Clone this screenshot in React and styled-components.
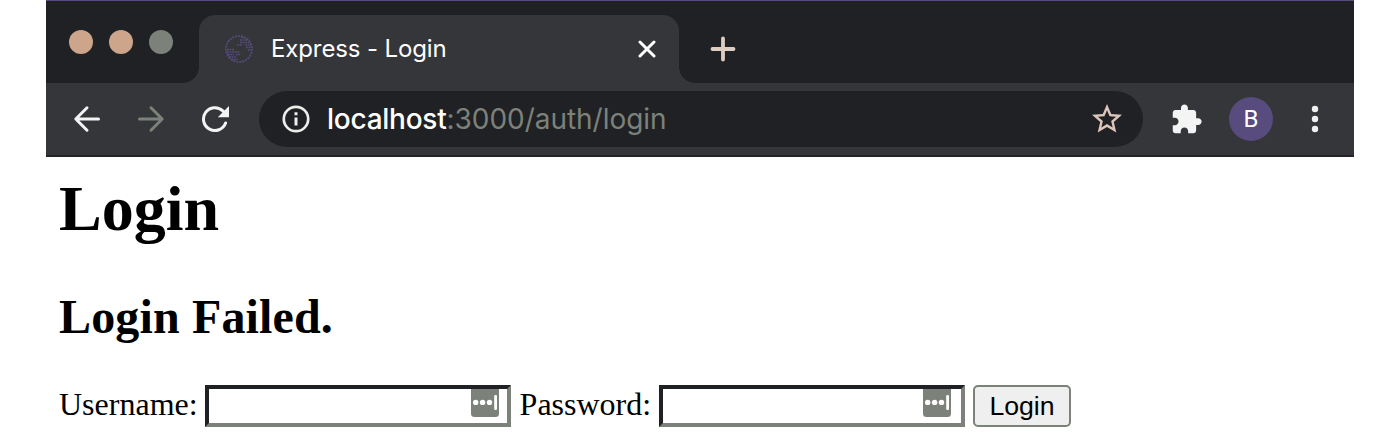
import React from "react";
import styled, { createGlobalStyle } from "styled-components";

const GlobalStyle = createGlobalStyle`
  * { box-sizing: border-box; }
  body { margin: 0; background: #fff; overflow: hidden; }
  svg { display: block; flex: none; }
`;

const Window = styled.div`
  width: 1308px;
  height: 445px;
  margin: 0 auto;
  background: #fff;
`;

const TabStrip = styled.header`
  display: flex;
  height: 83px;
  background: #202124;
  border-top: 1px solid #584b7d;
`;

const TrafficLights = styled.div`
  display: flex;
  gap: 16px;
  width: 137px;
  padding: 29px 0 0 23px;
`;

const Light = styled.span`
  width: 24px;
  height: 24px;
  border-radius: 50%;
  background: ${(p) => p.$color};
`;

const TabFoot = styled.span`
  width: 16px;
  height: 16px;
  align-self: flex-end;
  background: radial-gradient(
    circle at ${(p) => (p.$side === "left" ? "0 0" : "100% 0")},
    transparent 15.5px,
    #35363a 16.2px
  );
`;

const Tab = styled.div`
  display: flex;
  align-items: center;
  width: 480px;
  height: 68px;
  align-self: flex-end;
  padding: 0 23px 0 26px;
  border-radius: 16px 16px 0 0;
  background: #35363a;
`;

const TabTitle = styled.span`
  flex: 1;
  margin-left: 18px;
  color: #fff;
  font: 400 24px/30px Inter, sans-serif;
  letter-spacing: -0.12px;
`;

const NewTab = styled.div`
  padding: 35px 0 0 15px;
`;

const Toolbar = styled.nav`
  display: flex;
  align-items: center;
  height: 74px;
  padding: 0 29px 1px 27px;
  background: #35363a;
  border-bottom: 2px solid #232428;
`;

const NavButtons = styled.div`
  display: flex;
  gap: 36px;
  width: 186px;
`;

const AddressBar = styled.div`
  display: flex;
  align-items: center;
  width: 884px;
  height: 56px;
  margin-top: 1px;
  padding: 0 18px 0 22.5px;
  border-radius: 28px;
  background: #202124;
`;

const Url = styled.span`
  flex: 1;
  margin-left: 17.5px;
  color: #7c8279;
  font: 400 28px/34px Inter, sans-serif;
  letter-spacing: -0.03px;
  white-space: nowrap;
`;

const Host = styled.span`
  color: #fff;
  font-weight: 500;
  letter-spacing: -0.25px;
`;

const Actions = styled.div`
  display: flex;
  flex: 1;
  align-items: center;
  margin-top: 1px;
  padding-left: 27px;
`;

const Avatar = styled.span`
  display: flex;
  align-items: center;
  justify-content: center;
  width: 44px;
  height: 44px;
  margin: 0 38px 0 26px;
  border-radius: 50%;
  background: #584b7d;
  color: #fff;
  font: 400 24px/44px Roboto, sans-serif;
`;

const Page = styled.main`
  padding: 15px 13px 0;
  color: #000;
  font-family: "Liberation Serif", serif;
`;

const Title = styled.h1`
  margin: 0;
  font-size: 64px;
  line-height: 74px;
`;

const Message = styled.h2`
  margin: 43px 0 0;
  font-size: 48px;
  line-height: 56px;
  letter-spacing: 0.15px;
`;

const Form = styled.form`
  display: flex;
  margin-top: 40px;
`;

const Label = styled.label`
  width: ${(p) => p.$width};
  padding-left: ${(p) => p.$indent || 0};
  font-size: 32px;
  line-height: 39px;
  white-space: nowrap;
`;

const Field = styled.div`
  display: flex;
  justify-content: flex-end;
  width: 306px;
  height: 42px;
  margin-right: 8px;
  padding-right: ${(p) => p.$inset};
  border: 4px solid;
  border-color: #202124 #7c8279 #7c8279 #202124;
`;

const Input = styled.input`
  flex: 1;
  min-width: 0;
  padding: 0 4px;
  border: 0;
  outline: 0;
  background: transparent;
  font: 26px "Liberation Sans", sans-serif;
`;

const Submit = styled.button`
  width: 98px;
  height: 42px;
  padding: 0;
  border: 2px solid #7c8279;
  border-radius: 5px;
  background: #efefef;
  color: #000;
  font: 26.67px/36px "Liberation Sans", sans-serif;
`;

const Globe = () => (
  <svg width="28" height="28" viewBox="0 0 28 28">
    <circle cx="14" cy="14" r="13" fill="none" stroke="#584b7d" strokeWidth="1.7" strokeDasharray="2 1" />
    <g stroke="#584b7d" strokeWidth="1.5" strokeDasharray="1.8 0.8" fill="none">
      <path d="M16 2.5h5M15 5h8M15 7.5h10M12.5 10h5M20 10h6M21 12.5h5M23 15h3" />
      <path d="M2 14.5h8M2 17h13M3 19.5h6M11 19.5h4M4 22h7M7 24.5h6" />
    </g>
  </svg>
);

const Close = () => (
  <svg width="18" height="18" viewBox="0 0 18 18">
    <path d="M2 2 16 16M16 2 2 16" stroke="#fff" strokeWidth="3" strokeLinecap="round" />
  </svg>
);

const Plus = () => (
  <svg width="26" height="26" viewBox="0 0 26 26">
    <path d="M13 2.5v21M2.5 13h21" stroke="#e0cdc2" strokeWidth="3.8" strokeLinecap="round" />
  </svg>
);

const Arrow = ({ color, flip }) => (
  <svg width="28" height="28" viewBox="0 0 28 28">
    <path
      d="M25.5 14H3M14 2.8 2.8 14 14 25.2"
      transform={flip ? "translate(28) scale(-1 1)" : undefined}
      fill="none"
      stroke={color}
      strokeWidth="3"
      strokeLinecap="round"
      strokeLinejoin="round"
    />
  </svg>
);

const Reload = () => (
  <svg width="28" height="28" viewBox="0 0 28 28">
    <path
      d="M24.6 18A11.4 11.4 0 1 1 21.8 5.9L24 8"
      fill="none"
      stroke="#f4f4f4"
      strokeWidth="3"
      strokeLinecap="round"
    />
    <path d="M28 1v11.2H16.8Z" fill="#f4f4f4" />
  </svg>
);

const Info = () => (
  <svg width="28" height="28" viewBox="0 0 28 28">
    <circle cx="14" cy="14" r="12.2" fill="none" stroke="#ececec" strokeWidth="2.7" />
    <path d="M14 12.5v8M14 7.2v3" stroke="#ececec" strokeWidth="3" />
  </svg>
);

const Star = () => (
  <svg width="36" height="36" viewBox="0 0 24 24">
    <path
      d="M22 9.24l-7.19-.62L12 2 9.19 8.63 2 9.24l5.46 4.73L5.82 21 12 17.27 18.18 21l-1.63-7.03L22 9.24zM12 15.4l-3.76 2.27 1-4.28-3.32-2.88 4.38-.38L12 6.1l1.71 4.04 4.38.38-3.32 2.88 1 4.28L12 15.4z"
      fill="#dcc6ba"
    />
  </svg>
);

const Puzzle = () => (
  <svg width="33" height="33" viewBox="0 0 24 24">
    <path
      d="M20.5 11H19V7c0-1.1-.9-2-2-2h-4V3.5C13 2.12 11.88 1 10.5 1S8 2.12 8 3.5V5H4c-1.1 0-1.99.9-1.99 2v3.8H3.5c1.49 0 2.7 1.21 2.7 2.7s-1.21 2.7-2.7 2.7H2V20c0 1.1.9 2 2 2h3.8v-1.5c0-1.49 1.21-2.7 2.7-2.7s2.7 1.21 2.7 2.7V22H17c1.1 0 2-.9 2-2v-4h1.5c1.38 0 2.5-1.12 2.5-2.5S21.88 11 20.5 11z"
      fill="#f4f4f4"
    />
  </svg>
);

const Menu = () => (
  <svg width="8" height="28" viewBox="0 0 8 28" fill="#f0f0f0">
    <circle cx="4" cy="4" r="3.2" />
    <circle cx="4" cy="14" r="3.2" />
    <circle cx="4" cy="24" r="3.2" />
  </svg>
);

const PasswordKey = () => (
  <svg width="28" height="28" viewBox="0 0 28 28">
    <path d="M0 0H28V24.5Q28 28 24.5 28H3.5Q0 28 0 24.5Z" fill="#7c8279" />
    <g fill="#fff">
      <circle cx="4.7" cy="13.4" r="2.7" />
      <circle cx="11.6" cy="13.4" r="2.7" />
      <circle cx="18.5" cy="13.4" r="2.7" />
      <rect x="23.2" y="6" width="2.8" height="15" rx="1.2" />
    </g>
  </svg>
);

export default function App() {
  return (
    <>
      <GlobalStyle />
      <Window>
        <TabStrip>
          <TrafficLights>
            <Light $color="#cca58b" />
            <Light $color="#cca58b" />
            <Light $color="#7c8279" />
          </TrafficLights>
          <TabFoot $side="left" />
          <Tab>
            <Globe />
            <TabTitle>Express - Login</TabTitle>
            <Close />
          </Tab>
          <TabFoot $side="right" />
          <NewTab>
            <Plus />
          </NewTab>
        </TabStrip>
        <Toolbar>
          <NavButtons>
            <Arrow color="#f4f4f4" />
            <Arrow color="#7c8279" flip />
            <Reload />
          </NavButtons>
          <AddressBar>
            <Info />
            <Url>
              <Host>localhost</Host>:3000/auth/login
            </Url>
            <Star />
          </AddressBar>
          <Actions>
            <Puzzle />
            <Avatar>B</Avatar>
            <Menu />
          </Actions>
        </Toolbar>
        <Page>
          <Title>Login</Title>
          <Message>Login Failed.</Message>
          <Form onSubmit={(e) => e.preventDefault()}>
            <Label htmlFor="username" $width="146px">Username:</Label>
            <Field $inset="8px">
              <Input id="username" />
              <PasswordKey />
            </Field>
            <Label htmlFor="password" $width="140px" $indent="0.6px">Password:</Label>
            <Field $inset="10px">
              <Input id="password" type="password" />
              <PasswordKey />
            </Field>
            <Submit>Login</Submit>
          </Form>
        </Page>
      </Window>
    </>
  );
}
